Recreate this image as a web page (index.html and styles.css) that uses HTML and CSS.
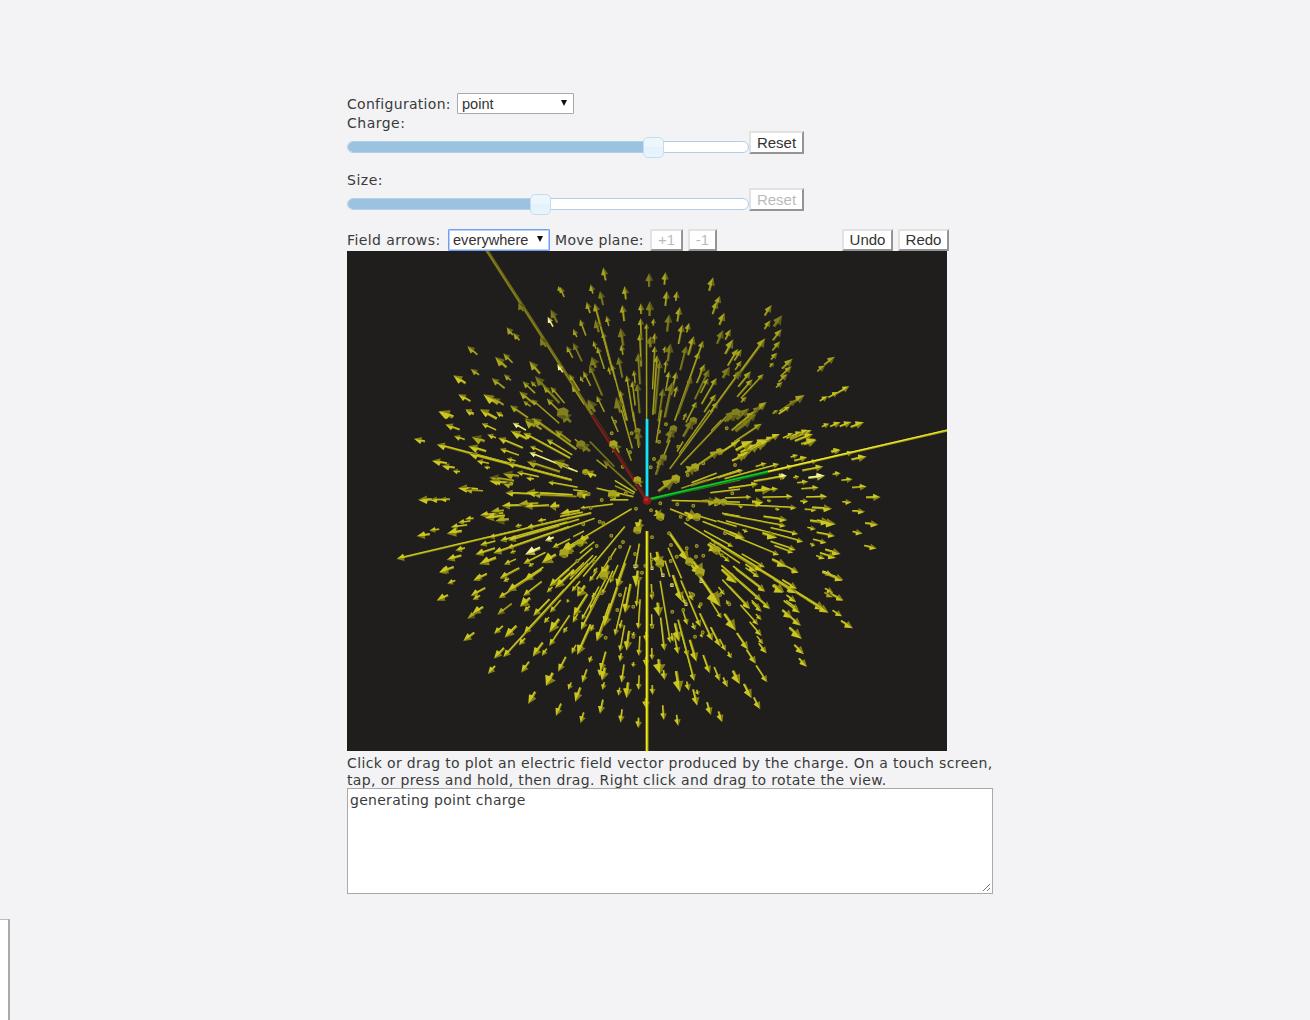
FILE: index.html
```html
<!DOCTYPE html>
<html lang="en">
<head>
<meta charset="utf-8">
<title>Electric field</title>
<link rel="stylesheet" href="styles.css">
</head>
<body>
<main class="app">
  <div class="row config"><span class="label w-config">Configuration:</span><div class="select select-config"><span>point</span><i class="caret"></i></div></div>
  <div class="label caption">Charge:</div>
  <div class="slider-row">
    <div class="slider"><div class="fill" style="width:306px"></div><div class="handle" style="left:295px"></div></div>
    <button class="btn reset">Reset</button>
  </div>
  <div class="label caption">Size:</div>
  <div class="slider-row">
    <div class="slider"><div class="fill" style="width:193px"></div><div class="handle" style="left:182px"></div></div>
    <button class="btn reset" disabled>Reset</button>
  </div>
  <div class="row tools">
    <span class="label w-field">Field arrows:</span>
    <div class="select select-arrows"><span>everywhere</span><i class="caret"></i></div>
    <span class="label w-plane">Move plane:</span>
    <button class="btn plus" disabled>+1</button>
    <button class="btn minus" disabled>-1</button>
    <button class="btn undo">Undo</button>
    <button class="btn redo">Redo</button>
  </div>
  <svg class="scene" id="scene" viewBox="0 0 600 500" width="600" height="500"></svg>
  <p class="label help">Click or drag to plot an electric field vector produced by the charge. On a touch screen,<br>tap, or press and hold, then drag. Right click and drag to rotate the view.</p>
  <div class="log"><span class="label">generating point charge</span>
    <svg class="grip" width="9" height="9" viewBox="0 0 9 9"><path d="M1 8L8 1M5 8L8 5"/></svg>
  </div>
</main>
<aside class="corner"></aside>
<script src="scene.js"></script>
</body>
</html>
```
FILE: styles.css
```css
* { box-sizing: border-box; }
html, body { height: 100%; }
body { margin: 0; background: #f3f3f5; overflow: hidden; display: flex; flex-direction: column; }
.app { width: 646px; height: 827px; margin: 92px 0 0 347px; flex: none; color: #3a3a3a; }
.label { font: 14px/17px Verdana, "DejaVu Sans", sans-serif; letter-spacing: 0.5px; white-space: nowrap; color: #3a3a3a; }
.row { display: flex; align-items: center; }
.config { height: 23px; }
.w-config { width: 110px; letter-spacing: 0.3px; padding-top: 1px; }
.w-field { width: 101px; letter-spacing: 0.4px; }
.w-plane { width: 96px; margin-left: 5px; letter-spacing: 0.3px; }
.caption { height: 17px; }
.select { display: flex; align-items: center; justify-content: space-between; background: #fff; border: 1px solid #a9a9a9; height: 21px; padding: 0 6px 0 4px; border-radius: 1px; font: 14.6px/18px "Liberation Sans", Arial, sans-serif; color: #333; }
.select-config { width: 117px; }
.select-arrows { width: 102px; height: 22px; border: 1px solid #6f9ff0; box-shadow: inset 0 0 0 1px #b9d0fa; }
.caret { border: 3.5px solid transparent; border-top: 6px solid #111; border-bottom: 0; margin-bottom: 2px; }
.slider-row { height: 40px; display: flex; align-items: flex-start; }
.slider { position: relative; width: 402px; height: 12px; margin-top: 9px; border: 1px solid #aed0ea; border-radius: 6px; background: #fff; }
.fill { height: 10px; background: #9bc2e1; border-radius: 5px 0 0 5px; }
.handle { position: absolute; top: -5px; width: 21px; height: 21px; border: 1px solid #c3dcee; border-radius: 5px; background: linear-gradient(#edf6fd 50%, #e3f1fb 50%, #eaf5fd); }
.btn { flex: none; height: 23px; padding: 0; background: #fff; border: 2px solid; border-color: #e2e2e2 #949494 #949494 #e2e2e2; font: 15px/18px "Liberation Sans", Arial, sans-serif; color: #333; }
.btn:disabled { color: #bbb; }
.reset { width: 55px; margin-top: -1px; }
.tools { height: 22px; }
.tools .btn { height: 22px; }
.plus { width: 33px; margin-left: -1px; }
.minus { width: 29px; margin-left: 5px; }
.undo { width: 51px; margin-left: 125px; }
.redo { width: 51px; margin-left: 5px; }
.scene { display: block; background: #1f1e1d; }
.help { margin: 0; padding-top: 4px; height: 37px; letter-spacing: 0.365px; }
.log { display: flex; justify-content: space-between; width: 646px; height: 106px; border: 1px solid #a9a9a9; background: #fff; padding: 3px 1px 1px 2px; }
.log .label { letter-spacing: 0.28px; }
.grip { align-self: flex-end; fill: none; stroke: #777; stroke-width: 1; }
.corner { width: 10px; flex: 1; background: #fff; border-top: 1px solid #bbb; border-right: 2px solid #aaa; }
```
FILE: scene.js
```js
// Field vectors, grouped by tile. Each tile has an origin in pixels; entries are
// "tipX,tipY,length,headWidth,tone" in thirds of a pixel. Tone: d dim, w highlight.
const tiles = [
  [33, -1, `415,158,30,24,d 380,232,30,20 400,248,30,18 262,288,40,20 345,320,48,26 370,310,40,18 272,356,32,18
   220,376,44,24 335,384,50,20 372,373,28,16 448,333,50,24 465,378,110,26,d 428,394,52,18 452,393,24,14 418,424,60,22
   310,433,52,28 338,443,40,20 235,433,42,20 175,484,46,26 256,478,28,18 300,478,58,24 348,485,24,14 390,466,66,20
   455,448,110,16 430,452,28,14 512,178,45,22,d 503,200,34,16,w 535,108,20,16 480,262,34,26,d 490,408,30,18
   512,410,65,16 500,445,60,18 532,342,30,16,w 435,505,60,22 455,504,80,20`],
  [213, -1, `130,52,40,20 0,110,34,16 92,103,28,18 120,122,45,20,d 194,108,40,20 268,68,42,22,d 317,66,38,20 80,155,36,18
   104,160,200,20 187,164,50,20 243,160,32,18 270,153,45,24,d 321,123,45,20 352,123,30,18 460,82,42,22 480,138,30,20
   472,153,42,20 140,197,32,16 60,208,52,16 242,204,60,18 281,205,22,14 260,220,290,14 328,193,52,22,d 360,171,44,20
   40,236,28,16 106,208,40,22,d 182,233,55,24,d 128,245,150,16 240,250,100,18 285,248,32,16 272,258,34,28,d
   368,223,60,20 388,218,30,18 494,188,40,22 20,288,40,16 40,278,62,18,d 112,290,70,16 100,272,26,14 184,283,32,16
   402,258,60,22 430,272,60,18 285,288,130,16 332,280,54,24,d 316,288,20,14 380,287,76,20,d 490,240,45,22,d
   512,238,35,18 520,268,50,24 535,296,60,20 175,320,64,20,d 235,308,95,22,d 292,315,180,18 300,332,160,20,d
   95,320,36,30,d 155,342,175,16 70,363,50,16 88,345,100,20,d 200,376,140,16 222,360,40,14 217,392,75,16
   328,364,60,16 350,365,72,18 418,305,220,18 435,342,62,18 448,358,100,20,d 445,385,50,16 470,384,90,18
   510,350,40,26,d 540,365,150,20 232,400,90,20,d 338,395,110,26,d 310,415,100,20,d 168,440,50,30,d 180,420,95,16
   110,437,54,16 83,448,44,34,d 395,380,120,18,d 410,455,70,16 468,433,64,18 530,480,50,30,d 320,330,38,14
   28,372,60,16 145,350,24,12 60,378,20,12 35,405,70,18 430,350,24,12 380,488,24,12 352,408,34,14 475,455,40,18`],
  [393, -1, `95,165,38,20 92,211,32,18 127,196,42,26,d 125,238,42,20 121,274,36,18 112,308,28,18 102,338,18,14
   76,265,130,24 158,326,44,22 155,349,44,18 143,372,36,18 128,396,26,16 285,320,40,20 256,346,30,18 328,409,50,18
   295,426,34,16 264,439,28,16 194,435,90,24 170,450,50,18,d 372,517,42,22 335,516,38,20 302,517,34,18 268,521,24,16
   33,364,60,20 38,388,70,18 71,372,100,16 80,456,100,20 66,521,100,20 120,552,90,20 215,541,70,20 219,552,58,22
   229,567,48,26,d 205,540,60,18 185,545,50,16 160,550,34,14 20,440,24,14 28,475,50,24,d 76,462,100,18 60,470,90,18,d
   45,485,90,22 50,492,80,20,d 35,508,60,24,d 84,568,70,28 80,577,60,26 100,560,60,18 60,585,40,26 298,598,26,16
   150,470,40,14 115,480,20,12 5,298,40,18 5,332,34,16 5,360,30,20,d`],
  [43, 159, `150,3,44,28 228,2,26,16 275,3,50,16 320,8,22,14 166,43,46,20 275,40,48,16 72,86,34,20 140,103,420,22
   192,78,34,16 245,80,42,28,d 292,73,28,16 325,83,80,20 368,38,46,16,w 362,62,56,26 400,68,160,20 420,108,42,14
   330,116,60,16 235,108,56,24 237,131,140,22 126,152,46,22 155,167,40,20 188,182,22,16 260,152,38,16 282,170,18,12
   350,145,28,14 352,160,200,18 418,127,140,16,w 410,154,105,24,d 470,88,90,16 405,30,36,30,d 430,25,160,22 495,60,60,20
   380,186,68,16 408,203,24,14 338,190,50,26,d 298,202,75,24,d 298,212,70,22 474,216,90,14 204,234,60,24 225,240,54,18,d
   310,214,60,18 340,222,28,22,d 84,269,42,24 120,269,40,18 150,268,30,16 346,248,80,20 408,247,140,24 430,254,130,18,d
   335,288,100,22 385,283,60,24,d 405,290,72,20 270,316,70,20 285,324,60,24 315,334,42,28,d 302,305,40,22,d
   225,328,26,16 204,338,36,16 182,352,50,18 170,371,46,26 80,379,40,22 118,362,30,16 20,447,600,20 296,383,100,16
   196,422,30,18 170,450,46,22 148,487,46,24 270,406,48,18 256,434,62,22 268,463,54,26 310,430,240,22 330,393,210,18
   355,392,160,20 350,416,200,18 342,464,40,16 405,434,50,26,w 400,462,75,18 375,350,20,14 442,334,26,14 465,393,28,20,w
   487,414,60,16 510,312,60,24 512,430,60,34 455,460,50,34 330,506,66,20 255,508,40,18 405,508,66,18 478,290,30,28
   490,150,50,30,d 360,430,18,12 415,470,18,12 408,355,140,18`],
  [213, 159, `90,95,105,0,d 45,88,55,0 165,212,190,0 130,150,150,18,d 25,174,30,0,w 110,235,115,0 165,228,90,0,d 40,240,42,0
   60,295,100,12 0,320,70,0 0,362,110,0 0,425,250,0 70,500,195,0 175,510,110,0 225,480,80,12 388,455,105,30 300,317,25,30
   540,440,195,0 540,277,205,0 400,325,75,0 540,180,155,0 347,205,65,34 460,0,220,0 500,20,200,0 305,0,100,0 308,138,60,24,d
   185,0,120,0 220,5,110,0 155,20,50,0 405,170,34,34 478,122,80,24 540,90,60,0 540,238,90,0 540,210,140,0,d
   160,100,34,32 232,58,50,24,d 340,50,52,28,d 400,28,60,26,d 60,98,40,30,d 76,183,36,24 52,252,36,24 147,252,32,32
   230,205,30,28 232,363,36,28 300,470,45,32 412,322,40,34 472,423,34,32 425,490,34,36 125,500,40,32 55,400,36,30
   0,433,52,36 495,275,60,28 475,275,50,26,d 530,5,40,32,d 5,8,40,34,d 298,155,20,0 330,90,50,0 370,95,35,0 450,0,160,0
   485,30,45,0 150,270,55,0 0,345,60,0 40,380,36,0 60,430,55,0 0,500,130,0 30,508,100,0 50,505,90,0 110,508,110,0
   275,470,42,0 308,500,70,0 330,500,50,0 365,505,100,0 530,350,60,0 540,320,55,0 520,410,100,14 540,378,120,0
   540,460,110,0 510,455,70,14 470,335,60,0 440,210,80,0,d 470,190,80,0 110,150,40,0 0,70,40,0 200,115,40,0`],
  [383, 189, `332,30,28,18 410,50,46,22 232,52,40,18 205,45,24,14 280,80,64,20 208,110,18,14 235,125,34,16 285,107,50,22,w
   332,100,24,16 368,118,34,16 410,140,44,18 266,143,52,16 292,170,64,18 452,172,44,20 235,184,24,16 365,186,28,16
   306,206,60,22 260,210,36,14 405,215,38,18 318,252,78,26 300,247,40,24 445,254,40,20 258,267,26,14 315,288,56,18
   398,280,30,18 290,308,42,16 256,316,16,14 332,342,48,22 440,325,38,18 318,354,50,20 285,356,28,16 340,420,64,20
   306,405,30,16,w 310,458,28,18 340,480,44,18 148,72,170,16 170,107,100,20 170,107,22,20,w 85,132,90,18 145,147,70,16 125,148,50,26
   188,170,90,16 65,172,80,14 100,187,34,30 125,182,14,10 200,203,220,16 172,240,72,20 168,258,190,16 205,282,85,16
   220,305,240,16 198,330,80,18 190,338,60,14 148,345,180,16 142,293,46,26 45,295,50,24 205,397,85,18 172,380,50,26
   105,382,80,16 88,412,50,16 105,452,120,18 200,445,50,18 162,456,36,28 198,485,35,16 205,508,45,16 120,505,170,18
   60,505,90,20 90,505,34,14 285,510,400,26 100,393,160,22 200,460,80,22 262,62,30,14 190,78,50,16 370,37,30,16
   52,42,50,24 60,35,40,26 78,15,50,30 260,0,40,24 25,5,60,18 110,70,34,14 40,90,80,14 55,275,18,12 20,427,50,26
   70,2,60,30 115,3,60,18 40,200,14,10 150,208,14,10`],
  [73, 319, `58,8,30,22 82,42,26,16 160,32,44,18 240,25,60,18 250,36,20,14 236,85,130,18 262,65,110,24 315,32,60,22
   50,92,38,22 152,78,50,20 158,90,26,16 142,147,34,20,d 156,133,40,24 232,135,55,20,d 310,78,70,18 300,110,40,30
   340,138,70,20 312,125,24,16 222,192,36,18 254,203,50,26 130,214,42,22 222,266,44,22 250,262,380,20 297,226,28,18
   312,192,180,20 204,312,32,20 304,308,40,20 338,260,52,24 366,258,26,16 325,402,42,24 372,160,24,16 388,188,50,28
   388,228,110,18 430,190,22,14 405,55,80,26 388,50,80,22 380,68,24,14 440,98,10,12 390,128,50,16 415,305,50,20
   378,348,44,34 408,438,40,20 445,360,24,16 466,396,46,24 487,338,42,18 482,460,34,18 483,180,130,20 460,140,80,24
   472,255,100,26 455,252,30,16 508,278,20,16 512,185,22,14 458,158,30,16 532,212,50,22 472,80,40,36 515,92,24,14
   508,35,40,14 450,20,60,16 520,10,20,12 485,150,80,14 455,65,40,14 538,318,26,20`],
  [243, 319, `20,214,120,22 35,25,40,28 35,75,80,14 80,55,80,24 42,170,125,26 75,197,150,16 105,130,90,24 138,52,50,30
   140,110,80,14 145,178,90,16 187,90,48,14 187,178,45,14 208,140,42,28 110,242,60,24 90,245,80,16 90,178,28,14
   147,258,60,16 90,275,26,16 187,270,36,14 130,202,16,14 130,292,16,14 32,303,60,20 36,332,40,28 38,360,24,16
   95,338,55,18 146,360,44,16 188,375,30,16 86,377,24,16 110,385,48,26 30,432,44,20 92,458,40,18 145,475,32,18
   222,450,44,18 265,468,34,18 224,242,100,18 242,220,190,16 210,312,44,36 224,330,30,20 265,252,60,18 268,215,56,26
   250,215,26,14 277,95,84,26 293,165,45,16 332,170,150,18 310,92,30,16 288,105,30,14 332,116,12,12 316,180,22,16
   338,203,12,12 368,212,90,20 320,275,68,24 294,260,100,16 313,333,190,18 270,367,64,30 297,362,28,18 322,407,50,22
   325,375,16,14 360,310,58,20 363,435,40,20 390,333,45,18 397,457,34,20 413,352,32,18 392,230,65,20 408,243,40,16
   425,265,22,16 438,182,60,30 392,110,160,40 440,40,60,28 405,75,30,14 418,103,14,14 480,117,120,18 515,92,160,18
   540,117,140,18 525,65,110,18 450,343,45,28 485,385,48,24 511,418,40,20 532,337,60,18 498,281,50,20 475,239,60,22
   530,250,38,18 520,222,30,14 515,198,55,18 505,165,80,16 515,150,24,14 515,125,40,16 617,68,44,22 620,56,45,18
   625,8,26,20 580,68,38,30 618,95,30,18 630,128,60,20 607,145,38,26 633,167,45,22 636,207,50,28 642,253,40,22
   651,290,34,20 716,128,75,24 758,32,66,20 760,92,36,18 730,82,30,18,d 757,139,34,18 789,175,42,22 340,15,50,40
   168,215,30,16 168,290,30,18 168,415,30,22 0,120,110,14 395,145,60,14 60,40,60,14 8,85,40,14 500,5,40,20`]
];
const CX = 300, CY = 249;
const parts = [];
function line(x1, y1, x2, y2, w, c) {
  parts.push(`<path d="M${x1.toFixed(1)} ${y1.toFixed(1)}L${x2.toFixed(1)} ${y2.toFixed(1)}" stroke="${c}" stroke-width="${w}"/>`);
}
function arrow(x, y, len, head, tone) {
  const dx = x - CX, dy = y - CY, r = Math.hypot(dx, dy) || 1;
  const ux = dx / r, uy = dy / r, nx = -uy, ny = ux;
  const upper = uy < -0.55;
  let lit = upper ? '#a8a41d' : '#cbc720', dark = upper ? '#6a671a' : '#858116';
  if (tone === 'd') { lit = upper ? '#7f7c1e' : '#aca91e'; dark = '#5b5818'; }
  if (tone === 'w') { lit = '#f4f2a0'; dark = '#b5b12a'; }
  len = Math.min(len, r - 14);
  const h = Math.min(head * 1.1, Math.max(len * 0.65, 3));
  const w = head ? Math.min(3, Math.max(1.7, head * 0.32)) : 1.7;
  const bx = x - ux * h, by = y - uy * h, tx = x - ux * len, ty = y - uy * len;
  line(tx, ty, bx, by, w.toFixed(2), dark);
  const o = w * 0.2;
  line(tx - Math.abs(nx) * o, ty - Math.abs(ny) * o, bx - Math.abs(nx) * o, by - Math.abs(ny) * o, (w * 0.6).toFixed(2), lit);
  if (!head) return;
  const p = (k) => `${(bx + nx * k).toFixed(1)} ${(by + ny * k).toFixed(1)}`;
  const m = `${(bx - ux * h * 0.12).toFixed(1)} ${(by - uy * h * 0.12).toFixed(1)}`;
  const s = nx > 0 ? -1 : 1, k = head / 2 + 0.3;
  parts.push(`<path fill="${lit}" d="M${x.toFixed(1)} ${y.toFixed(1)}L${p(s * k)}L${m}L${p(-s * k * 0.3)}Z"/>`);
  parts.push(`<path fill="${dark}" d="M${x.toFixed(1)} ${y.toFixed(1)}L${p(-s * k * 0.2)}L${p(-s * k)}Z"/>`);
}
// A cone seen nearly end-on: a faceted lump with a shaded lower side.
function lump(x, y, size, dim) {
  const at = (a, b) => `${(x + a * size).toFixed(1)} ${(y + b * size).toFixed(1)}`;
  parts.push(`<path fill="${dim ? '#827f1e' : '#a9a51d'}" d="M${at(-0.4, -0.35)}L${at(0.1, -0.5)}L${at(0.5, -0.25)}L${at(0.4, 0.35)}L${at(0, 0.5)}L${at(-0.5, 0.2)}Z"/>`);
  parts.push(`<path fill="${dim ? '#5f5c19' : '#807c18'}" d="M${at(-0.5, 0.2)}L${at(0.1, 0.15)}L${at(0.4, 0.35)}L${at(0, 0.5)}Z"/>`);
}
line(300, 249, 139, -2, 3.2, '#6a6716');
line(299, 248, 138.3, -2, 1, '#8e8a1c');
for (const [ox, oy, text] of tiles) {
  for (const item of text.trim().split(/\s+/)) {
    const [x, y, len, head, tone] = item.split(',');
    arrow(ox + x / 3, oy + y / 3, len / 3, head / 3, tone);
  }
}
// End-on vectors near the origin appear as small rings.
const rings = `318,43 297,65 215,70 210,127 355,110 272,172 282,147 188,170 197,250 125,270 228,296 273,301 301,280 352,283
 362,320 383,328 400,287 327,370 276,382 333,405 408,440 410,408 350,440 225,432 189,396 154,377 119,335 86,252 110,408
 150,445 102,455 52,453 92,293 256,467 332,453 275,448 430,437 485,436 495,370 230,468 383,195 430,160 525,165 155,70
 297,95 165,35 500,55 517,250 70,343 180,410 130,340 380,415 125,550 180,555 246,488 277,550 335,525 400,555 172,600
 220,590 277,650 370,600 480,555 508,583 422,583 337,605 428,667 405,680 220,680 137,683 395,552 155,505 60,540`;
for (const r of rings.trim().split(/\s+/)) {
  const [x, y] = r.split(',');
  parts.push(`<circle cx="${(213 + x / 3).toFixed(1)}" cy="${(159 + y / 3).toFixed(1)}" r="1.4" fill="#5a571a" stroke="#9c981f" stroke-width="1.1"/>`);
}
[[635, 566], [652, 568], [663, 575], [701, 581], [672, 585], [686, 604]].forEach(([x, y]) =>
  parts.push(`<rect x="${x - 348}" y="${y - 252}" width="2" height="2.5" fill="#333116" stroke="#dcd976" stroke-width="1"/>`));
// Axes and the long vectors along them.
line(300, 280, 300, 500, 3, '#9d990f');
line(299.7, 280, 299.7, 500, 1.5, '#f1ee16');
line(420, 221, 600, 179.5, 2.2, '#aaa51a');
line(420, 220.7, 600, 179, 1.2, '#f3ef28');
line(245, 164, 300, 249, 3.4, '#521817');
line(244.3, 164, 299.3, 249, 1.5, '#7f201c');
const lumps = `160,103,26 232,63,20,d 340,57,24,d 400,32,24,d 310,143,22,d 347,207,28 405,172,26 478,125,22 62,104,28,d
 76,186,20 60,253,20 157,253,28 232,210,24 232,360,26 301,320,26 410,321,26 470,421,26 388,455,26 420,487,30 300,460,28
 132,497,28 60,398,24 12,430,30 470,276,22 490,276,22 528,10,30,d 8,10,36,d`;
for (const l of lumps.trim().split(/\s+/)) {
  const [x, y, size, dim] = l.split(',');
  lump(213 + x / 3, 159 + y / 3, size / 3, dim);
}
line(300, 249, 421, 221, 3, '#087d19');
line(300, 248.5, 421, 220.3, 1.5, '#12cb28');
line(300, 168, 300, 247, 3, '#19b9c5');
line(300, 168, 300, 247, 1.7, '#12edff');
parts.push('<circle cx="300" cy="249.5" r="4.3" fill="#8c1816"/><circle cx="299.3" cy="248.5" r="2" fill="#bd2521"/>');
document.getElementById('scene').innerHTML = '<g fill="none">' + parts.join('') + '</g>';
```
